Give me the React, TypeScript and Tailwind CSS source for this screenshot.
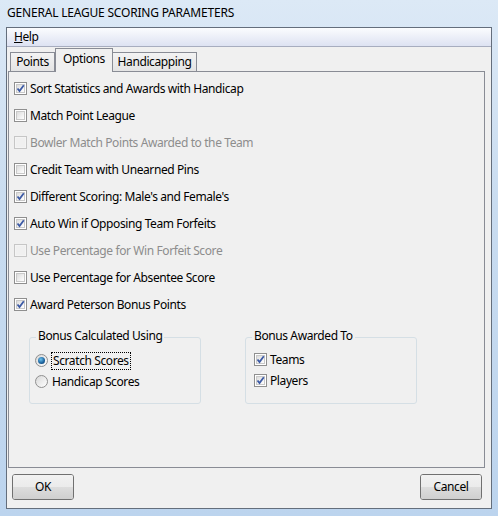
import React from "react";

const font = { fontFamily: '"Noto Sans", "Open Sans", sans-serif' };

function CheckBox({ checked, disabled }: { checked?: boolean; disabled?: boolean }) {
  return (
    <span
      className={
        "relative inline-flex h-[13px] w-[13px] shrink-0 items-center justify-center border " +
        (disabled ? "border-[#c6c6c6] bg-[#f4f4f4]" : "border-[#8f8f8f] bg-white")
      }
    >
      <span
        className={
          "absolute inset-[1px] " +
          (disabled
            ? "bg-[#f0f0f0]"
            : "bg-gradient-to-br from-[#dcdcdc] via-[#eeeeee] to-[#ffffff] border border-[#c9c9c9]")
        }
      />
      {checked && (
        <svg width="9" height="9" viewBox="0 0 9 9" className="relative">
          <path d="M1.5 4.5 L3.5 7 L7.8 1.2" fill="none" stroke="#3c5aa5" strokeWidth="1.8" />
        </svg>
      )}
    </span>
  );
}

function Radio({ checked }: { checked?: boolean }) {
  return (
    <span className="relative inline-flex h-[13px] w-[13px] shrink-0 items-center justify-center rounded-full border border-[#8f8f8f] bg-gradient-to-br from-[#d8d8d8] to-[#ffffff]">
      {checked && (
        <span className="h-[7px] w-[7px] rounded-full bg-[radial-gradient(circle_at_40%_35%,#6cc3ee,#1a5f9a_60%,#0b3a66)]" />
      )}
    </span>
  );
}

function Row({ label, checked, disabled }: { label: string; checked?: boolean; disabled?: boolean }) {
  return (
    <div className="flex h-[27px] items-center gap-[3px] pl-[5px]">
      <CheckBox checked={checked} disabled={disabled} />
      <span className={disabled ? "text-[#8d8d8d]" : "text-black"}>{label}</span>
    </div>
  );
}

function Button({ label }: { label: string }) {
  return (
    <div className="flex h-[26px] w-[62px] flex-col overflow-hidden rounded-[3px] border border-[#707070] shadow-[inset_0_0_0_1px_#fcfcfc]">
      <div className="relative flex h-full items-center justify-center bg-[linear-gradient(#f2f2f2_0%,#ebebeb_50%,#dddddd_51%,#cfcfcf_100%)] text-black">
        {label}
      </div>
    </div>
  );
}

export default function App() {
  return (
    <div
      className="flex h-[516px] w-[498px] flex-col bg-[linear-gradient(180deg,#dce9f6_0%,#c9dcf0_40%,#bcd4ee_100%)] text-[12px] leading-none tracking-[-0.4px]"
      style={font}
    >
      <div className="flex h-[27px] items-center pl-[7px] pb-[1px] text-[12px] tracking-[-0.2px] text-black">
        GENERAL LEAGUE SCORING PARAMETERS
      </div>
      <div className="mx-[6px] flex h-[482px] flex-col border border-[#646e7c] bg-[#f0f0f0]">
        <div className="flex h-[19px] items-center border-b border-[#a7adbf] bg-[linear-gradient(#fbfcfe,#dde2f2)] pl-[7px]">
          <span>
            <span className="underline">H</span>elp
          </span>
        </div>
        <div className="flex flex-1 flex-col px-[1px] pt-[1px]">
          <div className="relative flex h-[23px] items-end pl-[2px]">
            <div className="flex h-[19px] w-[45px] items-center justify-center border border-b-0 border-[#898c95] bg-[linear-gradient(#f3f3f3,#e4e4e4)]">
              Points
            </div>
            <div className="relative z-10 mb-[-1px] flex h-[24px] w-[58px] items-start justify-center border border-b-0 border-[#898c95] bg-[#f0f0f0] pt-[4px]">
              Options
            </div>
            <div className="flex h-[19px] w-[84px] items-center justify-center border border-b-0 border-l-0 border-[#898c95] bg-[linear-gradient(#f3f3f3,#e4e4e4)]">
              Handicapping
            </div>
          </div>
          <div className="mr-[5px] flex h-[397px] flex-col border border-[#898c95] bg-[#f0f0f0] pt-[3px]">
            <Row label="Sort Statistics and Awards with Handicap" checked />
            <Row label="Match Point League" />
            <Row label="Bowler Match Points Awarded to the Team" disabled />
            <Row label="Credit Team with Unearned Pins" />
            <Row label="Different Scoring: Male's and Female's" checked />
            <Row label="Auto Win if Opposing Team Forfeits" checked />
            <Row label="Use Percentage for Win Forfeit Score" disabled />
            <Row label="Use Percentage for Absentee Score" />
            <Row label="Award Peterson Bonus Points" checked />
            <div className="mt-[12px] flex gap-[44px] pl-[20px]">
              <div className="relative mt-[7px] h-[67px] w-[172px] rounded-[3px] border border-[#d5dfe5]">
                <span className="absolute left-[6px] top-[-8px] bg-[#f0f0f0] px-[2px]">Bonus Calculated Using</span>
                <div className="flex flex-col pl-[5px] pt-[12px]">
                  <div className="flex h-[21px] items-center gap-[3px]">
                    <Radio checked />
                    <span className="border border-dotted border-black px-[1px] py-[2px]">Scratch Scores</span>
                  </div>
                  <div className="flex h-[21px] items-center gap-[4px]">
                    <Radio />
                    <span>Handicap Scores</span>
                  </div>
                </div>
              </div>
              <div className="relative mt-[7px] h-[67px] w-[172px] rounded-[3px] border border-[#d5dfe5]">
                <span className="absolute left-[6px] top-[-8px] bg-[#f0f0f0] px-[2px]">Bonus Awarded To</span>
                <div className="flex flex-col pl-[8px] pt-[11px]">
                  <div className="flex h-[21px] items-center gap-[3px]">
                    <CheckBox checked />
                    <span>Teams</span>
                  </div>
                  <div className="flex h-[21px] items-center gap-[3px]">
                    <CheckBox checked />
                    <span>Players</span>
                  </div>
                </div>
              </div>
            </div>
          </div>
          <div className="flex flex-1 items-start justify-between pl-[4px] pr-[8px] pt-[6px]">
            <Button label="OK" />
            <Button label="Cancel" />
          </div>
        </div>
      </div>
    </div>
  );
}
